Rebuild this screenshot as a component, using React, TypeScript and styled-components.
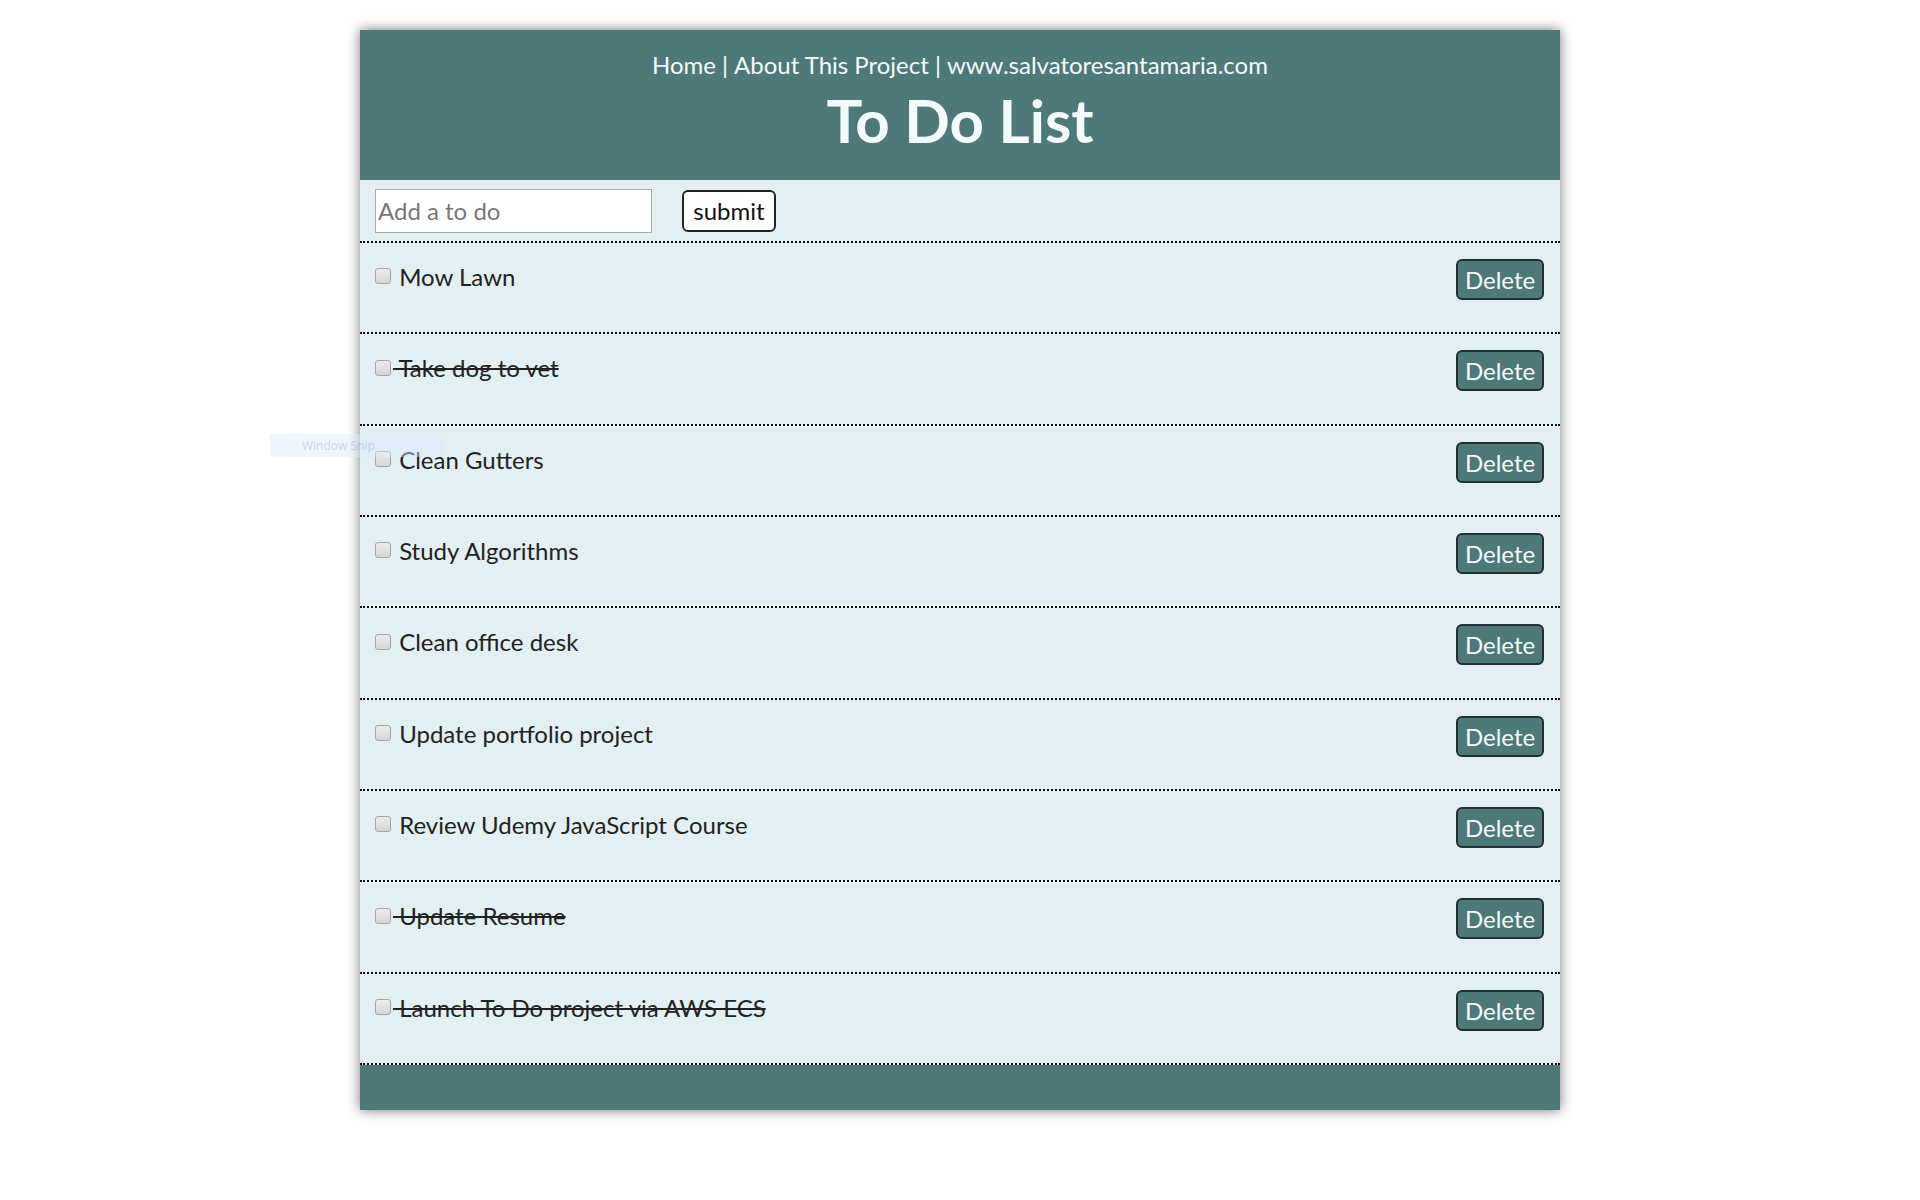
import React, { useState } from "react";
import styled, { createGlobalStyle } from "styled-components";

const GlobalStyle = createGlobalStyle`
  html, body { margin: 0; padding: 0; background: #ffffff; }
  body { font-family: "Lato", "Open Sans", sans-serif; }
  * { box-sizing: border-box; }
`;

const TEAL = "#4e7977";
const LIGHT = "#e3eff0";

const Page = styled.div`
  position: relative;
  width: 1920px;
  min-height: 1200px;
  padding-top: 30px;
`;

const Card = styled.main`
  width: 1200px;
  margin: 0 auto;
  background: ${LIGHT};
  box-shadow: 0 0 12px rgba(0, 0, 0, 0.55);
  display: flex;
  flex-direction: column;
`;

const Header = styled.header`
  height: 150px;
  background: ${TEAL};
  color: #f4fbfb;
  display: flex;
  flex-direction: column;
  align-items: center;
  padding-top: 20px;
`;

const Nav = styled.nav`
  font-size: 24px;
  line-height: 29px;
  display: flex;
  gap: 6px;
`;

const NavLink = styled.a`
  color: #f4fbfb;
  text-decoration: none;
`;

const Title = styled.h1`
  margin: 5px 0 0;
  font-size: 60px;
  line-height: 72px;
  font-weight: 700;
`;

const InputBar = styled.form`
  height: 63px;
  display: flex;
  align-items: center;
  gap: 30px;
  padding-left: 15px;
  border-bottom: 2px dotted #111;
`;

const TextInput = styled.input`
  width: 277px;
  height: 44px;
  border: 1px solid #a9a9a9;
  background: #fff;
  font-family: "Lato", sans-serif;
  font-size: 24px;
  padding: 0 2px;
  color: #222;
  outline: none;
  &::placeholder { color: #777; }
`;

const SubmitButton = styled.button`
  width: 94px;
  height: 42px;
  border: 2px solid #222;
  border-radius: 6px;
  background: #fff;
  font-family: "Lato", sans-serif;
  font-size: 24px;
  color: #111;
  padding: 0;
`;

const List = styled.ul`
  list-style: none;
  margin: 0;
  padding: 0;
`;

const Row = styled.li`
  height: 91.33px;
  display: flex;
  justify-content: space-between;
  align-items: flex-start;
  padding: 16px 16px 0 15px;
  border-bottom: 2px dotted #111;
`;

const Label = styled.label<{ $done: boolean }>`
  margin-top: 4px;
  display: flex;
  align-items: center;
  font-size: 24px;
  line-height: 28.8px;
  color: #222;
  text-decoration: ${(p) => (p.$done ? "line-through" : "none")};
  text-decoration-thickness: 2px;
`;

const Check = styled.input`
  appearance: none;
  width: 16px;
  height: 16px;
  margin: -2px 2px 0 0;
  border: 1px solid #a4a4a4;
  border-radius: 3px;
  background: linear-gradient(#ececec, #d6d6d6);
`;

const DeleteButton = styled.button`
  width: 88px;
  height: 41px;
  border: 2px solid #1f3232;
  border-radius: 6px;
  background: ${TEAL};
  color: #f4fbfb;
  font-family: "Lato", sans-serif;
  font-size: 24px;
  padding: 0;
`;

const Footer = styled.footer`
  height: 45px;
  background: ${TEAL};
`;

const SnipHint = styled.div`
  position: absolute;
  left: 270px;
  top: 434px;
  width: 172px;
  height: 23px;
  background: rgba(220, 236, 252, 0.45);
  font-family: "Open Sans", sans-serif;
  font-size: 12px;
  line-height: 23px;
  padding-left: 32px;
  color: rgba(120, 135, 160, 0.3);
  pointer-events: none;
`;

type Todo = { text: string; done: boolean };

const initial: Todo[] = [
  { text: "Mow Lawn", done: false },
  { text: "Take dog to vet", done: true },
  { text: "Clean Gutters", done: false },
  { text: "Study Algorithms", done: false },
  { text: "Clean office desk", done: false },
  { text: "Update portfolio project", done: false },
  { text: "Review Udemy JavaScript Course", done: false },
  { text: "Update Resume", done: true },
  { text: "Launch To Do project via AWS ECS", done: true },
];

export default function App() {
  const [todos] = useState<Todo[]>(initial);
  return (
    <>
      <GlobalStyle />
      <Page>
        <Card>
          <Header>
            <Nav>
              <NavLink href="#">Home</NavLink>
              <span>|</span>
              <NavLink href="#">About This Project</NavLink>
              <span>|</span>
              <NavLink href="#">www.salvatoresantamaria.com</NavLink>
            </Nav>
            <Title>To Do List</Title>
          </Header>
          <InputBar onSubmit={(e) => e.preventDefault()}>
            <TextInput placeholder="Add a to do" />
            <SubmitButton type="submit">submit</SubmitButton>
          </InputBar>
          <List>
            {todos.map((t) => (
              <Row key={t.text}>
                <Label $done={t.done}>
                  <Check type="checkbox" />
                  {"\u00a0" + t.text}
                </Label>
                <DeleteButton type="button">Delete</DeleteButton>
              </Row>
            ))}
          </List>
          <Footer />
        </Card>
        <SnipHint>Window Snip</SnipHint>
      </Page>
    </>
  );
}
